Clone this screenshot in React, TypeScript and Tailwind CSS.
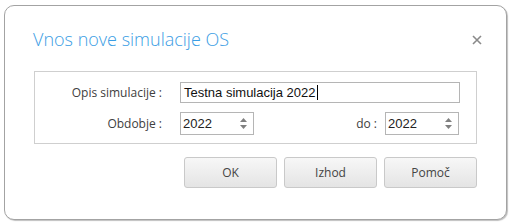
import React from "react";

const ui = { fontFamily: '"Open Sans", "Liberation Sans", sans-serif' };

function Spin({ value }: { value: string }) {
  return (
    <div className="flex items-center w-[74px] h-[23px] border border-[#b5b5b5] bg-white pl-[2px] pr-[6px]">
      <span className="flex-1 text-[13px] text-[#222]">{value}</span>
      <div className="flex flex-col items-center gap-[3px]">
        <svg width="7" height="4" viewBox="0 0 7 4">
          <path d="M0 4 L3.5 0 L7 4 Z" fill="#808080" />
        </svg>
        <svg width="7" height="4" viewBox="0 0 7 4">
          <path d="M0 0 L3.5 4 L7 0 Z" fill="#808080" />
        </svg>
      </div>
    </div>
  );
}

function Btn({ label }: { label: string }) {
  return (
    <button
      className="w-[93px] h-[31px] rounded-[3px] border border-[#c9c9c9] bg-gradient-to-b from-[#f7f7f7] to-[#e4e4e4] text-[12px] text-[#444]"
      style={ui}
    >
      {label}
    </button>
  );
}

export default function App() {
  return (
    <div
      className="w-[512px] h-[223px] bg-white pt-[5px] pl-[4px]"
      style={{ fontFamily: '"Liberation Sans", Arial, sans-serif' }}
    >
      <div className="w-[503px] h-[215px] border border-[#a3a3a3] rounded-[10px] shadow-[1px_1px_1px_rgba(0,0,0,0.25)] bg-white flex flex-col">
        <div className="flex items-center justify-between h-[65px] pl-[28px] pr-[24px]">
          <h1 className="text-[18px] font-light text-[#3a9de4] pt-[2px]" style={ui}>
            Vnos nove simulacije OS
          </h1>
          <svg width="10" height="10" viewBox="0 0 10 10" className="mt-[2px]">
            <path d="M1 1 L9 9 M9 1 L1 9" stroke="#8a8a8a" strokeWidth="1.6" />
          </svg>
        </div>
        <div className="ml-[29px] w-[443px] h-[73px] border border-[#cfcfcf] pt-[10px] flex flex-col gap-[9px]">
          <div className="flex items-center">
            <span className="w-[127px] text-right text-[12px] text-[#404040]" style={ui}>
              Opis simulacije :
            </span>
            <div className="ml-[18px] w-[280px] h-[21px] border border-[#b5b5b5] flex items-center pl-[3px] text-[13px] text-[#111]">
              Testna simulacija 2022
              <span className="inline-block w-[1px] h-[15px] bg-black ml-[1px]" />
            </div>
          </div>
          <div className="flex items-center">
            <span className="w-[127px] text-right text-[12px] text-[#404040]" style={ui}>
              Obdobje :
            </span>
            <div className="ml-[18px]">
              <Spin value="2022" />
            </div>
            <span className="w-[123px] text-right text-[12px] text-[#404040]" style={ui}>
              do :
            </span>
            <div className="ml-[8px]">
              <Spin value="2022" />
            </div>
          </div>
        </div>
        <div className="flex gap-[7px] ml-[179px] mt-[13px]">
          <Btn label="OK" />
          <Btn label="Izhod" />
          <Btn label="Pomoč" />
        </div>
      </div>
    </div>
  );
}
